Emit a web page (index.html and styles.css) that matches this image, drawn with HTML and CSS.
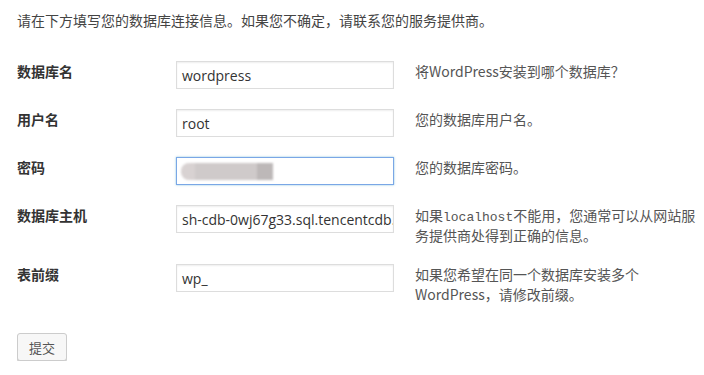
FILE: index.html
```html
<!DOCTYPE html>
<html lang="zh-CN">
<head>
<meta charset="utf-8">
<title>数据库连接信息</title>
<link rel="stylesheet" href="styles.css">
</head>
<body>
<div class="page">
  <p class="intro">请在下方填写您的数据库连接信息。如果您不确定，请联系您的服务提供商。</p>
  <div class="form-table">
    <div class="row">
      <div class="label">数据库名</div>
      <div class="field"><span class="value">wordpress</span></div>
      <div class="desc">将WordPress安装到哪个数据库？</div>
    </div>
    <div class="row">
      <div class="label">用户名</div>
      <div class="field"><span class="value">root</span></div>
      <div class="desc">您的数据库用户名。</div>
    </div>
    <div class="row">
      <div class="label">密码</div>
      <div class="field focus"><span class="blur"><span class="b1"></span><span class="b2"></span><span class="b3"></span></span></div>
      <div class="desc">您的数据库密码。</div>
    </div>
    <div class="row">
      <div class="label">数据库主机</div>
      <div class="field"><span class="value">sh-cdb-0wj67g33.sql.tencentcdb.com</span></div>
      <div class="desc">如果<code>localhost</code>不能用，您通常可以从网站服务提供商处得到正确的信息。</div>
    </div>
    <div class="row">
      <div class="label">表前缀</div>
      <div class="field"><span class="value">wp_</span></div>
      <div class="desc">如果您希望在同一个数据库安装多个WordPress，请修改前缀。</div>
    </div>
  </div>
  <div class="actions"><button class="button" type="button">提交</button></div>
</div>
</body>
</html>
```

FILE: styles.css
```css
html, body {
  margin: 0;
  padding: 0;
  background: #fff;
  overflow: hidden;
}
body {
  font-family: "Noto Sans CJK SC", "Open Sans", sans-serif;
  font-size: 14px;
  color: #444;
}
.page {
  padding: 10px 0 0 17px;
}
.intro {
  margin: 0;
  line-height: 20px;
  color: #444;
}
.form-table {
  margin-top: 21px;
  display: flex;
  flex-direction: column;
}
.row {
  display: grid;
  grid-template-columns: 159px 218px 309px;
  align-items: start;
  padding: 10px 0;
}
.row:nth-child(4) {
  padding-bottom: 9px;
}
.label {
  font-weight: 700;
  line-height: 20px;
  color: #333;
}
.field {
  box-sizing: border-box;
  height: 28px;
  border: 1px solid #ddd;
  box-shadow: inset 0 1px 2px rgba(0,0,0,0.07);
  background: #fff;
  padding: 0 5px;
  overflow: hidden;
  white-space: nowrap;
  display: flex;
  align-items: center;
}
.field.focus {
  border-color: #7aa7e6;
  box-shadow: 0 0 2px rgba(30,140,190,0.5);
}
.value {
  font-family: "Open Sans", sans-serif;
  font-size: 14px;
  color: #333;
}
.blur {
  display: flex;
  height: 17px;
  filter: blur(1.2px);
  margin-left: -1px;
}
.blur span { display: block; height: 17px; }
.b1 { width: 14px; background: #d8d2d2; border-radius: 8px 0 0 8px; }
.b2 { width: 62px; background: #cfcaca; }
.b3 { width: 16px; background: #bdb8b8; }
.desc {
  margin-left: 21px;
  line-height: 20px;
  color: #555;
}
.desc code {
  font-family: "Liberation Mono", monospace;
  font-size: 13px;
  line-height: 1;
}
.actions {
  margin-top: 19px;
}
.button {
  box-sizing: border-box;
  width: 50px;
  height: 28px;
  padding: 0;
  font-family: "Noto Sans CJK SC", sans-serif;
  font-size: 13px;
  color: #555;
  background: #f7f7f7;
  border: 1px solid #ccc;
  border-radius: 3px;
  box-shadow: 0 1px 0 #ccc;
}
```
